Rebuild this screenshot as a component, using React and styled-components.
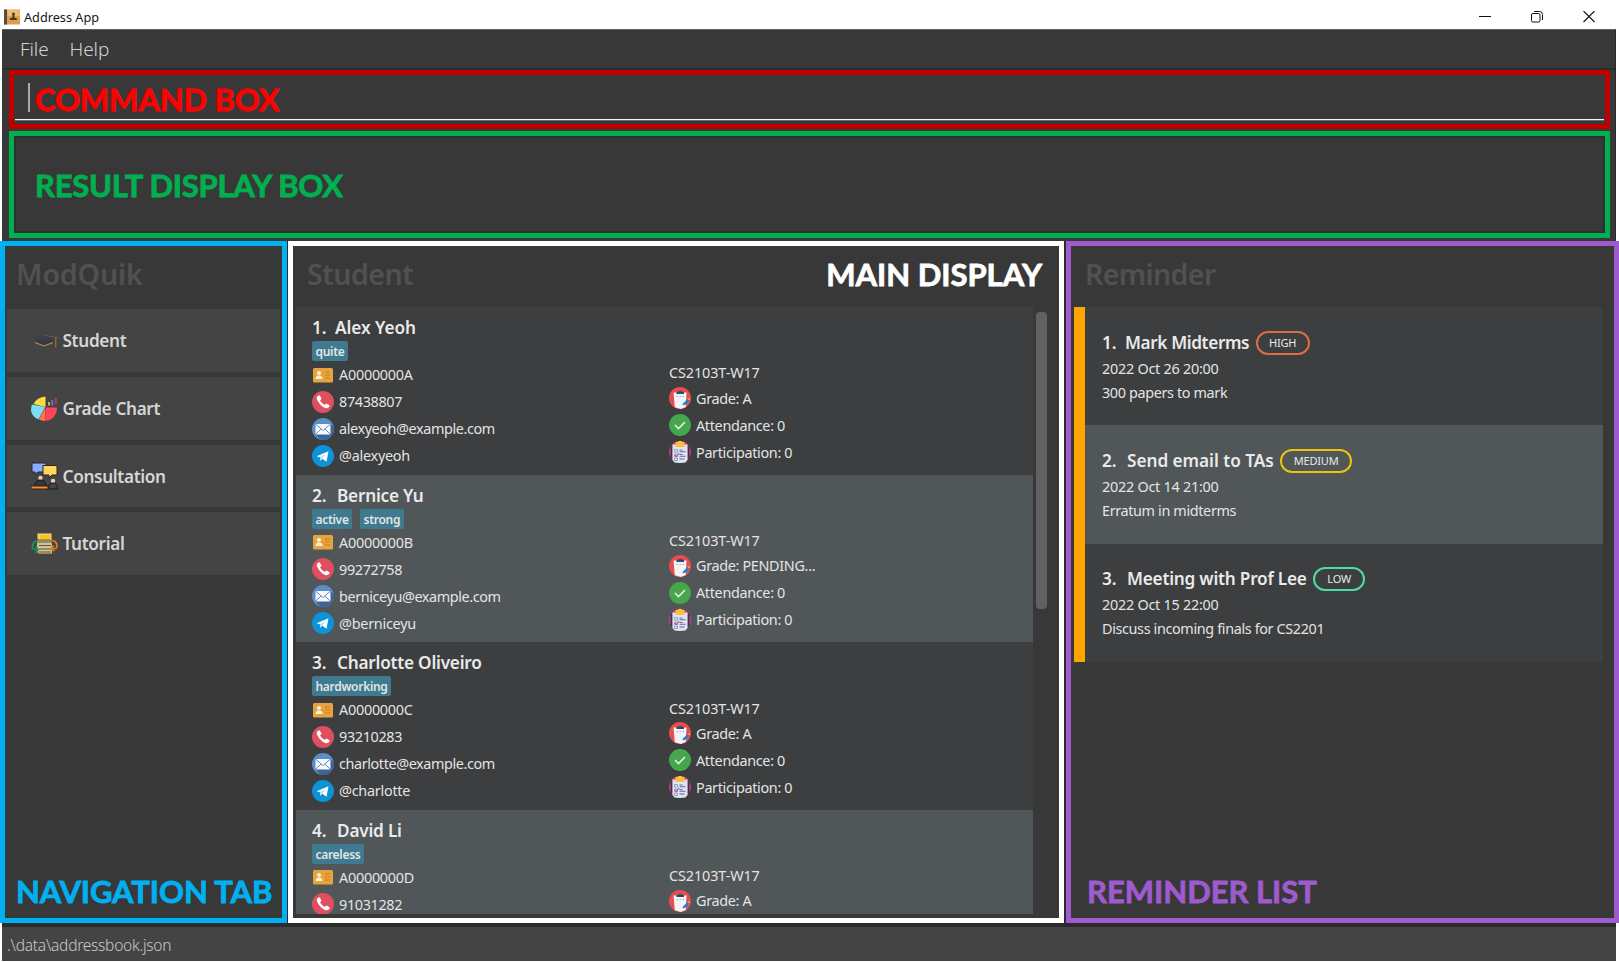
import React from "react";
import styled, { createGlobalStyle } from "styled-components";

const Global = createGlobalStyle`
  * { box-sizing: border-box; }
  body { margin: 0; background: #fff; overflow: hidden; }
`;

const Window = styled.div`
  width: 1619px; height: 962px; display: flex; flex-direction: column;
  background: #fff; color: #e4e4e4; font-family: "Noto Sans", "Open Sans", sans-serif;
`;
const TitleBar = styled.header`
  height: 29px; display: flex; align-items: center; padding: 4px 24px 0 4px; color: #161616;
`;
const WindowTitle = styled.span`
  font-size: 12.7px; margin-left: 4px; flex: 1; line-height: 20px; padding-top: 1px;
`;
const WindowButtons = styled.div`display: flex; gap: 40px; align-items: center;`;
const Client = styled.div`
  height: 212px; margin: 0 3px 0 2px; background: #383838; border-top: 1px solid #5c6461;
  border-right: 1px solid #2a2a2a; display: flex; flex-direction: column;
`;
const MenuBar = styled.nav`
  height: 40px; border-bottom: 2px solid #2d2d2d; display: flex; padding: 0 18px; gap: 21px;
`;
const MenuItem = styled.span`
  font-size: 19px; font-weight: 300; line-height: 39px; color: #d2d2d2; letter-spacing: -0.1px;
`;
const CommandBox = styled.div`
  height: 59px; margin: 0 5px 0 7px; border: 5px solid #c00000; display: flex; padding: 0 1px;
`;
const CommandField = styled.div`
  flex: 1; height: 45px; border-bottom: 1px solid #f4f4f4; box-shadow: 0 1px #6a6a6a;
  display: flex; align-items: center; padding-left: 13px;
`;
const Caret = styled.i`width: 2px; height: 29px; background: #a9a9a9; margin-right: 5px;`;
const Label = styled.strong`
  font-family: Lato, "Noto Sans", sans-serif; font-weight: 700; font-size: 31px; line-height: 38px;
  letter-spacing: ${(p) => p.$ls || 0}px; color: ${(p) => p.$color}; white-space: nowrap;
  -webkit-text-stroke: 0.8px ${(p) => p.$color}; padding-top: ${(p) => p.$drop || 0}px;
`;
const ResultBox = styled.div`
  height: 107px; margin: 2px 5px 0 7px; border: 5px solid #00b050; display: flex; align-items: center;
  box-shadow: inset 0 0 0 2px #2f2f2f; padding: 0 21px;
`;
const Panels = styled.main`height: 682px; display: flex; background: #2b2b2b; gap: 1px;`;
const Panel = styled.section`
  width: ${(p) => p.$w}px; border: 5px solid ${(p) => p.$color}; background: #383838;
  display: flex; flex-direction: column; margin-left: ${(p) => p.$ml || 0}px;
`;
const PanelHead = styled.div`
  height: 61px; flex: none; display: flex; justify-content: space-between; padding: ${(p) => p.$pad};
`;
const PanelTitle = styled.h2`
  margin: 0; font-size: 28.5px; line-height: 56px; font-weight: 600; color: #515151; letter-spacing: ${(p) => p.$ls}px;
`;
const PanelFoot = styled.div`margin-top: auto; height: 46px; padding-left: ${(p) => p.$pl}px;`;
const NavList = styled.div`display: flex; flex-direction: column; gap: 5.2px; padding: 2.4px 2px 0;`;
const NavItem = styled.div`
  height: 62.5px; background: #444; display: flex; align-items: center; gap: 4.5px; padding: 0 0 0 24px;
  font-size: 17.2px; font-weight: 600; color: #d6d6d6; letter-spacing: -0.34px;
`;
const ListArea = styled.div`display: flex; height: 606.5px; padding-left: 3px; gap: 3px;`;
const StudentList = styled.div`width: 737px; overflow: hidden;`;
const Scroll = styled.div`width: 11px; height: 297px; margin-top: 5px; border-radius: 4px; background: #616161;`;
const StudentCard = styled.article`
  height: 167.6px; padding: 9px 0 0 16px; background: ${(p) => (p.$alt ? "#515658" : "#3c3e3f")};
`;
const Name = styled.h3`
  margin: 0; font-size: 17.2px; font-weight: 600; line-height: 24px; display: flex; align-items: center;
  color: #eaeaea; white-space: nowrap; letter-spacing: ${(p) => p.$ls || 0}px;
`;
const Index = styled.span`width: ${(p) => p.$w || 25}px; letter-spacing: 0;`;
const Tags = styled.div`display: flex; gap: 8px; margin-top: 1px; height: 20px;`;
const Tag = styled.span`
  background: #3e7b91; border-radius: 2px; padding: 0 3.5px; font-size: 12px; line-height: 21px; font-weight: 600;
  letter-spacing: -0.3px;
`;
const Columns = styled.div`display: flex;`;
const Column = styled.div`width: ${(p) => p.$w}px;`;
const Row = styled.div`
  height: ${(p) => p.$h || 27}px; display: flex; align-items: center; gap: 5px;
  font-size: 14.4px; white-space: nowrap; letter-spacing: ${(p) => p.$ls ?? -0.33}px;
`;
const ReminderList = styled.div`margin-left: 3px; width: 529px; border-left: 11px solid #ffa500;`;
const ReminderCard = styled.article`
  height: 118.4px; padding: 23.5px 0 0 17px; background: ${(p) => (p.$alt ? "#515658" : "#3c3e3f")};
`;
const Details = styled.div`padding-top: 2px;`;
const Line = styled.p`
  margin: 0; font-size: 14.4px; line-height: 24px; letter-spacing: ${(p) => p.$ls}px;
`;
const Pill = styled.span`
  width: ${(p) => p.$w}px; height: 24px; margin-left: 6.5px; border: 2px solid ${(p) => p.$color}; border-radius: 12px;
  font-size: 11px; font-weight: 400; display: flex; align-items: center; justify-content: center; letter-spacing: -0.2px;
`;
const StatusBar = styled.footer`
  height: 38px; margin: 0 3px 0 2px; background: #444; border-top: 4px solid #2b2b2b; padding-left: 5px;
  font-size: 15.5px; font-weight: 300; line-height: 36px; color: #c8c8c8; letter-spacing: -0.24px;
`;

const BookIcon = () => (
  <svg width="16" height="16" viewBox="0 0 16 16"><rect width="16" height="15" y=".5" fill="#d9a24a" /><rect width="3" height="15" y=".5" fill="#5a4a42" /><rect x="3.500" y="1" width="12" height="6" fill="#ecbf6f" /><path d="M8 5a1.500 1.500 0 1 1 3 0l-.7 2v1.500l2.500.7V11H6V9.200l2.500-.7V7z" fill="#4c3724" /></svg>
);
const CapIcon = () => (
  <svg width="27" height="27" viewBox="0 0 27 27"><path d="M0 10.500 14 8.500 27 10 15 13Z" fill="#3b3d48" /><path d="M14 8.500 27 10.500" fill="none" stroke="#6f5c44" /><path d="M5 12.500v3.500l8 3 9-3v-4l-7 1.500z" fill="#37354a" /><path d="m4 15.500 9 3.500 9-3.500" fill="none" stroke="#b8963f" strokeWidth="1.100" /><path d="M24.700 10.500v10" stroke="#8e7433" strokeWidth="1.300" /></svg>
);
const ChartIcon = () => (
  <svg width="27" height="27" viewBox="0 0 27 27"><path d="M14.500 12V1.500Q6 2 2.500 9z" fill="#ffd93e" /><path d="M14 12 1 9.500C-1.500 16 1 22 7.500 24.500z" fill="#7cdcfa" /><path d="M14 12.500 8 24.500q3 1.500 6.500 1.200z" fill="#ff7449" /><path d="M14.500 12.500H26C26 20 21 25.700 14.500 25.700z" fill="#ff4358" /><path d="M18 10.500V7" stroke="#e5a33a" strokeWidth="2" /><path d="M21.300 10.500V5" stroke="#4f7fd0" strokeWidth="2" /><path d="M24.800 9.500V3" stroke="#b04055" strokeWidth="2" /></svg>
);
const TalkIcon = () => (
  <svg width="27" height="28" viewBox="0 0 27 28"><path d="M1 1h14v9H7l-3 2.500V10H1z" fill="#8aabff" stroke="#23252e" /><path d="M12 3.500h14V13h-5l-3 3v-3h-6z" fill="#ffd55a" stroke="#2a2721" /><circle cx="9.500" cy="16" r="2.200" fill="#f4c7b9" /><path d="M4 24q0-6 5.500-6t5.500 6" fill="#33373c" stroke="#17191c" /><circle cx="22" cy="19" r="2.200" fill="#f4c7b9" /><path d="M17.500 27q0-6 4.500-6t4.500 6z" fill="#44484d" stroke="#17191c" /><path d="M0 24h17v3H0z" fill="#ff8a32" stroke="#2b2019" /></svg>
);
const TutorialIcon = () => (
  <svg width="27" height="27" viewBox="0 0 27 27"><path d="M6 3h15v11H6z" fill="#e9d692" stroke="#55492c" /><path d="M8.500 5h11v4h-11z" fill="#ffc20e" /><path d="M6 10h13l2.500 4v10H7L5 20z" fill="#cfc391" stroke="#4e4833" /><path d="M7 12h12M8 15.500h12M8 19h13M8 22h12" stroke="#5c573f" strokeWidth="1.100" /><path d="M5 10.500q-4.500 3.500-3.500 8l5 1.500M5 16l2 4-2.500 3" fill="none" stroke="#159557" strokeWidth="1.700" /><path d="M20 11h3.500q4 3.500 1.500 7.500H21M22.500 15.500l-2 3 3 2.500" fill="none" stroke="#e07a12" strokeWidth="1.700" /></svg>
);
const IdIcon = () => (
  <svg width="22" height="22" viewBox="0 0 22 22"><rect x="1" y="4" width="20" height="14.500" rx="1.500" fill="#e5a53c" /><circle cx="7" cy="9" r="2" fill="#fbf0dc" /><path d="M3.500 15q0-3 2.500-3.500h2q2.500.5 2.500 3.500z" fill="#fbf0dc" /><path d="M13 8h5M13 11h5M13 14h5" stroke="#d9772b" strokeWidth="1.200" /></svg>
);
const PhoneIcon = () => (
  <svg width="22" height="22" viewBox="0 0 22 22"><circle cx="11" cy="11" r="11" fill="#e04f5f" /><path d="M6.500 4.500q-3 1.500-1 5 3 5.500 7.500 7.500 3 1 4.500-1.500.4-.8-.5-1.500l-2-1.200q-.8-.4-1.400.3l-.8 1Q9.800 12.600 8 9.500l1-1q.6-.6.200-1.400L8 5q-.6-1-1.500-.5z" fill="#fff" /></svg>
);
const MailIcon = () => (
  <svg width="22" height="22" viewBox="0 0 22 22"><circle cx="11" cy="11" r="11" fill="#5b8dc9" /><path d="m18.500 6 3.300 3A11 11 0 0 1 8 21.500L3.500 16z" fill="#3c6499" /><rect x="3.500" y="6" width="15" height="10.500" rx="1" fill="#f6f8fb" /><path d="m4 6.500 7 6 7-6M4 16l5-5M18 16l-5-5" fill="none" stroke="#6b8db8" strokeWidth="1" /></svg>
);
const TelegramIcon = () => (
  <svg width="22" height="22" viewBox="0 0 22 22"><circle cx="11" cy="11" r="11" fill="#0d93d8" /><path d="m4.500 11.300 12-5-2 10.500-4.200-3-1.800 2-.6-3.600z" fill="#fff" /><path d="m8 12.200 6-3.800-4 5-1.400 2.400z" fill="#b7dcf0" /></svg>
);
const GradeIcon = () => (
  <svg width="22" height="22" viewBox="0 0 22 22"><circle cx="11" cy="11" r="11" fill="#e84c4f" /><path d="M4.500 5.500h13l-.7 14.500-5 2-6-1.800z" fill="#f4f4f6" /><path d="M7.500 7V4.800h2a2 2 0 0 1 3.500 0h2V7z" fill="#2b4a70" /><path d="M7.500 9.500h1.500M10.500 9.500h1.500M13.500 9.500h1.500" stroke="#91b5ce" strokeWidth="1.200" /><path d="m14 16.500 4.500-4.500 1.800 1.800-4.500 4.500z" fill="#1d80d5" /><path d="m18.500 12 1.200-1.200 1.600 1.600-1.200 1.200z" fill="#f3a23a" /><path d="m13.500 18.300.5-1.800 1.300 1.300z" fill="#2b4a70" /></svg>
);
const CheckIcon = () => (
  <svg width="22" height="22" viewBox="0 0 22 22"><circle cx="11" cy="11" r="11" fill="#45a64b" /><path d="m6 11 3.500 3.500L16 8" fill="none" stroke="#e3f3e3" strokeWidth="1.600" /></svg>
);
const PartIcon = () => (
  <svg width="22" height="22" viewBox="0 0 22 22"><circle cx="11" cy="11" r="11" fill="#d63a73" /><path d="M2.500 4.500v13M19.500 4.500v13" stroke="#40305f" strokeWidth="2" /><path d="M3.500 3.500h15V19l-2 2.500-5.500.5-5.500-.5-2-2.500z" fill="#dfe4ee" /><path d="M6.500 6V1h2.500a2 2 0 0 1 4 0h2.500V6z" fill="#f9bf3f" /><path d="M5.500 8.500h3v2.500h-3zM5.500 13h3v2.500h-3zM5.500 17h3v2.500h-3z" fill="none" stroke="#7fa9d2" /><path d="m6 14 1.500 1.500L10 12" fill="none" stroke="#e64786" strokeWidth="1.200" /><path d="M10.500 9h3M10.500 10.800h6M10.500 13.500h3M10.500 15.300h6M10.500 18h5" stroke="#5d6ba3" strokeWidth="1.100" /></svg>
);

const NAV = [[CapIcon, "Student"], [ChartIcon, "Grade Chart"], [TalkIcon, "Consultation"], [TutorialIcon, "Tutorial"]];
const STUDENTS = [
  { name: "Alex Yeoh", tags: ["quite"], id: "A0000000A", phone: "87438807", mail: "alexyeoh@example.com", handle: "@alexyeoh", grade: "A", ls: -0.05, iw: 23 },
  { name: "Bernice Yu", tags: ["active", "strong"], id: "A0000000B", phone: "99272758", mail: "berniceyu@example.com", handle: "@berniceyu", grade: "PENDING...", ls: -0.22 },
  { name: "Charlotte Oliveiro", tags: ["hardworking"], id: "A0000000C", phone: "93210283", mail: "charlotte@example.com", handle: "@charlotte", grade: "A", ls: -0.23 },
  { name: "David Li", tags: ["careless"], id: "A0000000D", phone: "91031282", grade: "A", ls: -0.2 },
];
const REMINDERS = [
  { title: "Mark Midterms", level: "HIGH", color: "#dd6e42", w: 54, date: "2022 Oct 26 20:00", note: "300 papers to mark", ls: -0.38, iw: 23 },
  { title: "Send email to TAs", level: "MEDIUM", color: "#eec20b", w: 72, date: "2022 Oct 14 21:00", note: "Erratum in midterms", ls: -0.03 },
  { title: "Meeting with Prof Lee", level: "LOW", color: "#4fdda1", w: 52, date: "2022 Oct 15 22:00", note: "Discuss incoming finals for CS2201", ls: -0.22 },
];

export default function App() {
  return (
    <Window>
      <Global />
      <TitleBar>
        <BookIcon />
        <WindowTitle>Address App</WindowTitle>
        <WindowButtons>
          <svg width="12" height="12"><path d="M0 5.500h12" stroke="#111" /></svg>
          <svg width="12" height="12" fill="none" stroke="#111"><rect x=".5" y="2.500" width="8.500" height="8.500" rx="1.500" /><path d="M3 .5h5.500a3 3 0 0 1 3 3V9" /></svg>
          <svg width="12" height="12"><path d="m.5 0 11 11m0-11-11 11" stroke="#111" strokeWidth="1.100" /></svg>
        </WindowButtons>
      </TitleBar>
      <Client>
        <MenuBar><MenuItem>File</MenuItem><MenuItem>Help</MenuItem></MenuBar>
        <CommandBox><CommandField><Caret /><Label $color="#ff0000" $drop={3} $ls={-0.1}>COMMAND BOX</Label></CommandField></CommandBox>
        <ResultBox><Label $color="#00b050" $ls={-0.25}>RESULT DISPLAY BOX</Label></ResultBox>
      </Client>
      <Panels>
        <Panel $w={287} $color="#00b0f0">
          <PanelHead $pad="0 11px"><PanelTitle $ls={-0.1}>ModQuik</PanelTitle></PanelHead>
          <NavList>{NAV.map(([Icon, t]) => <NavItem key={t}><Icon />{t}</NavItem>)}</NavList>
          <PanelFoot $pl={11}><Label $color="#00b0f0" $ls={-0.1}>NAVIGATION TAB</Label></PanelFoot>
        </Panel>
        <Panel $w={776} $color="#fff">
          <PanelHead $pad="0 17px 0 14px"><PanelTitle $ls={-0.5}>Student</PanelTitle><Label $color="#fff" $drop={9}>MAIN DISPLAY</Label></PanelHead>
          <ListArea>
            <StudentList>
              {STUDENTS.map((s, i) => (
                <StudentCard key={s.id} $alt={i % 2}>
                  <Name $ls={s.ls}><Index $w={s.iw}>{i + 1}.</Index>{s.name}</Name>
                  <Tags>{s.tags.map((t) => <Tag key={t}>{t}</Tag>)}</Tags>
                  <Columns>
                    <Column $w={357}>
                      <Row $ls={-0.25}><IdIcon />{s.id}</Row>
                      <Row $ls={-0.35}><PhoneIcon />{s.phone}</Row>
                      {s.mail && <Row $ls={-0.4}><MailIcon />{s.mail}</Row>}
                      {s.handle && <Row $ls={-0.25}><TelegramIcon />{s.handle}</Row>}
                    </Column>
                    <Column $w={300}>
                      <Row $h={23.7} $ls={-0.1}>CS2103T-W17</Row>
                      <Row><GradeIcon />Grade: {s.grade}</Row>
                      {s.mail && <Row><CheckIcon />Attendance: 0</Row>}
                      {s.mail && <Row><PartIcon />Participation: 0</Row>}
                    </Column>
                  </Columns>
                </StudentCard>
              ))}
            </StudentList>
            <Scroll />
          </ListArea>
        </Panel>
        <Panel $w={553} $ml={1} $color="#9e5acf">
          <PanelHead $pad="0 14px"><PanelTitle $ls={-0.6}>Reminder</PanelTitle></PanelHead>
          <ReminderList>
            {REMINDERS.map((r, i) => (
              <ReminderCard key={r.title} $alt={i % 2}>
                <Name $ls={r.ls}><Index $w={r.iw}>{i + 1}.</Index>{r.title}<Pill $w={r.w} $color={r.color}>{r.level}</Pill></Name>
                <Details><Line $ls={-0.25}>{r.date}</Line><Line $ls={-0.36}>{r.note}</Line></Details>
              </ReminderCard>
            ))}
          </ReminderList>
          <PanelFoot $pl={16}><Label $color="#9e5acf">REMINDER LIST</Label></PanelFoot>
        </Panel>
      </Panels>
      <StatusBar>.\data\addressbook.json</StatusBar>
    </Window>
  );
}
